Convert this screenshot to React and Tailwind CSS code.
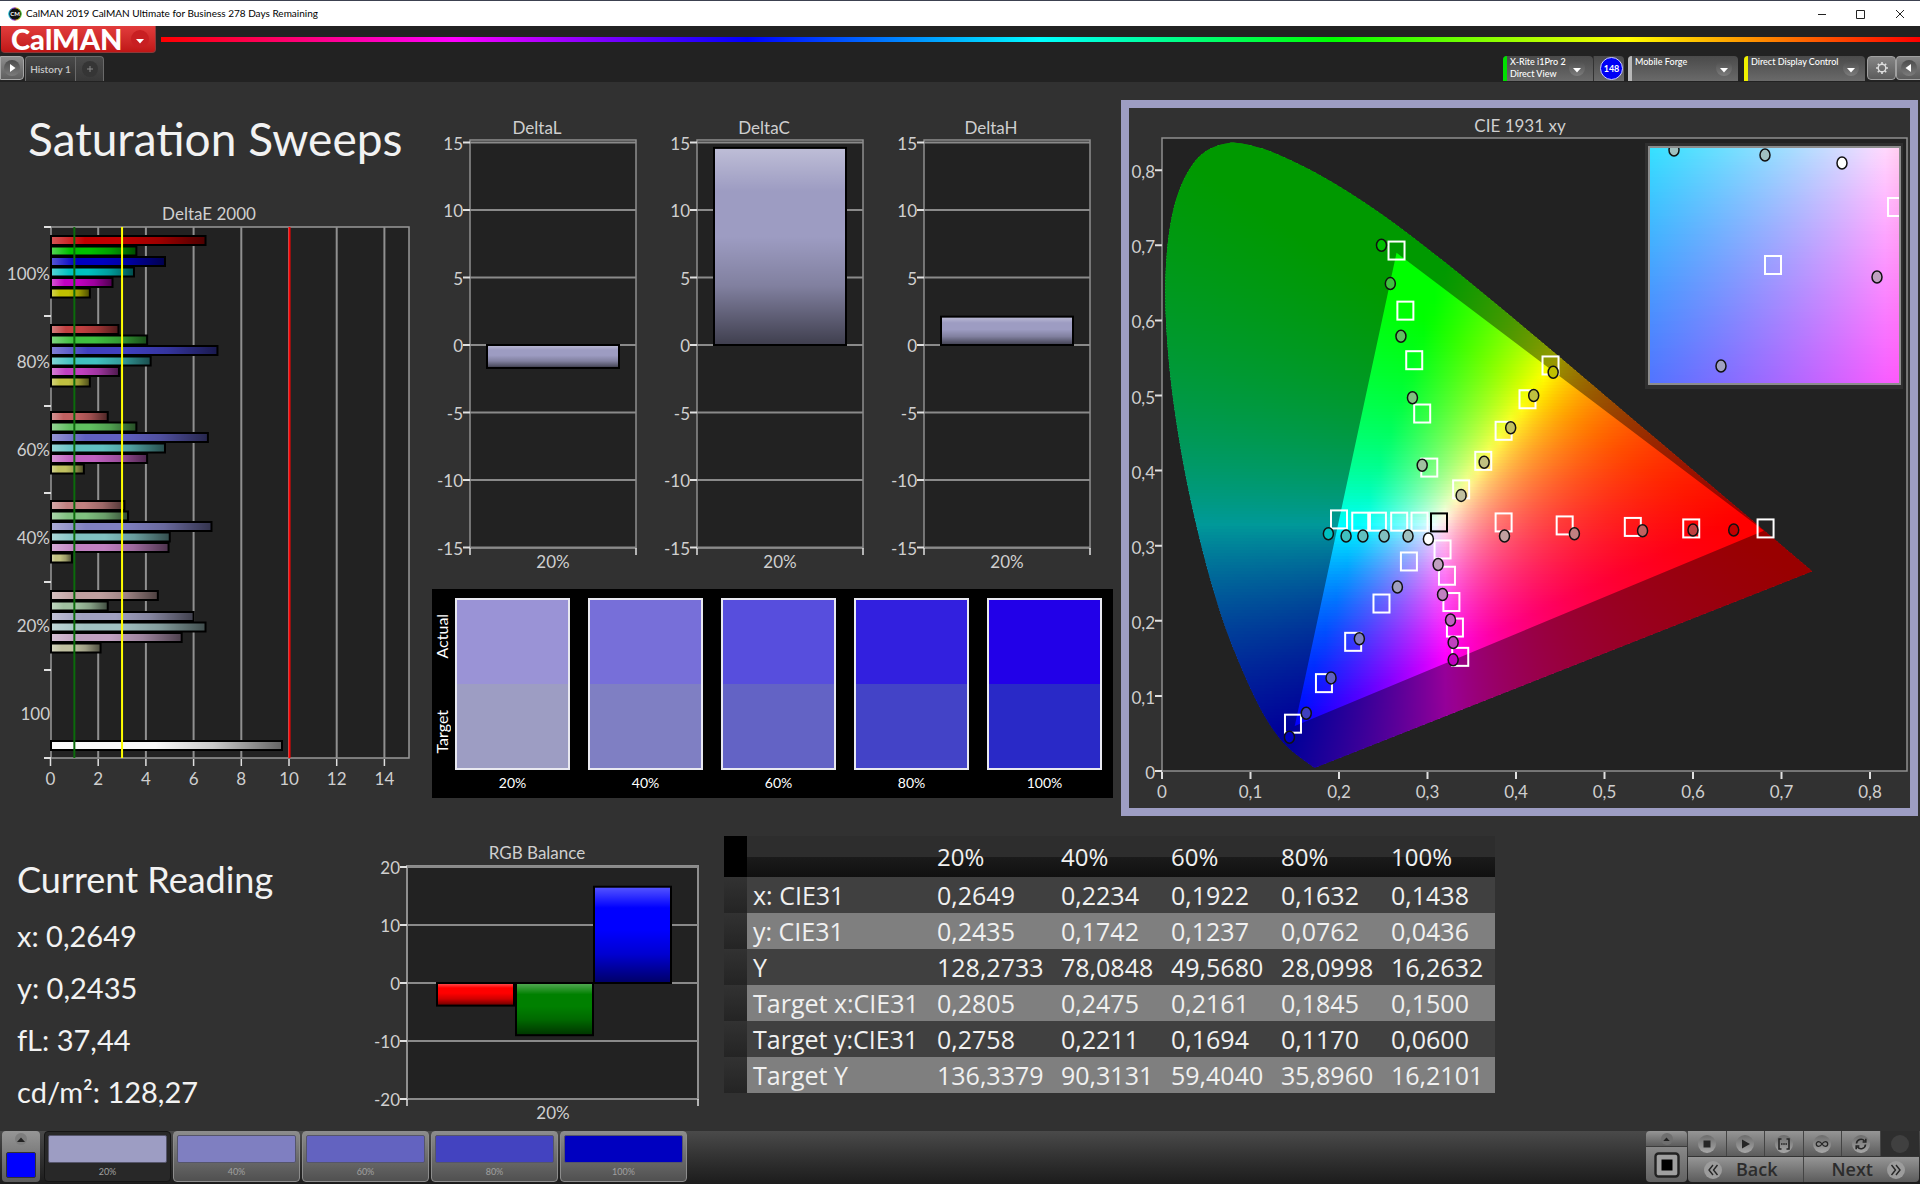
import React from "react";

const LEVELS = ["20%", "40%", "60%", "80%", "100%"];

// ---------- data ----------

const deltaE = [
  { label: "100%", low: 0, values: [6.5, 3.6, 4.8, 3.5, 2.6, 1.65] },
  { label: "80%", low: 64, values: [2.85, 4.05, 7, 4.2, 2.87, 1.65] },
  { label: "60%", low: 96, values: [2.4, 3.6, 6.6, 4.8, 4.05, 1.4] },
  { label: "40%", low: 128, values: [3.1, 3.25, 6.75, 5, 4.95, 0.9] },
  { label: "20%", low: 160, values: [4.5, 2.4, 6, 6.5, 5.5, 2.1] },
];

// which of r, g, b are on: red, green, blue, cyan, magenta, yellow
const HUES = [
  [1, 0, 0],
  [0, 1, 0],
  [0, 0, 1],
  [0, 1, 1],
  [1, 0, 1],
  [1, 1, 0],
];

function hueColor(hue, low) {
  return `rgb(${HUES[hue].map((on) => (on ? 192 : low)).join(",")})`;
}

const swatches = [
  { label: "20%", actual: "#9a93d6", target: "#9d9dc3", chip: "bg-[#9d9dc3]" },
  { label: "40%", actual: "#776fd9", target: "#7f7fc3", chip: "bg-[#7f7fc1]" },
  { label: "60%", actual: "#574edd", target: "#6363c5", chip: "bg-[#6363c0]" },
  { label: "80%", actual: "#3220df", target: "#4343c7", chip: "bg-[#4343c0]" },
  { label: "100%", actual: "#2200e8", target: "#2929c7", chip: "bg-[#0000c0]" },
];

const tableRows = [
  ["x: CIE31", "0,2649", "0,2234", "0,1922", "0,1632", "0,1438"],
  ["y: CIE31", "0,2435", "0,1742", "0,1237", "0,0762", "0,0436"],
  ["Y", "128,2733", "78,0848", "49,5680", "28,0998", "16,2632"],
  ["Target x:CIE31", "0,2805", "0,2475", "0,2161", "0,1845", "0,1500"],
  ["Target y:CIE31", "0,2758", "0,2211", "0,1694", "0,1170", "0,0600"],
  ["Target Y", "136,3379", "90,3131", "59,4040", "35,8960", "16,2101"],
];

const locus = [
  [0.1741, 0.005], [0.1714, 0.0051], [0.1644, 0.0109], [0.1566, 0.0177],
  [0.144, 0.0297], [0.1355, 0.0399], [0.1241, 0.0578], [0.1096, 0.0868],
  [0.0913, 0.1327], [0.0687, 0.2007], [0.0454, 0.295], [0.0235, 0.4127],
  [0.0082, 0.5384], [0.0039, 0.6548], [0.0139, 0.7502], [0.0389, 0.812],
  [0.0743, 0.8338], [0.1142, 0.8262], [0.1547, 0.8059], [0.1929, 0.7816],
  [0.2296, 0.7543], [0.2658, 0.7243], [0.3016, 0.6923], [0.3373, 0.6589],
  [0.3731, 0.6245], [0.4087, 0.5896], [0.4441, 0.5547], [0.4788, 0.5202],
  [0.5125, 0.4866], [0.5752, 0.4242], [0.627, 0.3725], [0.6658, 0.334],
  [0.6915, 0.3083], [0.719, 0.2809], [0.7347, 0.2653],
];

const gamut = [[0.68, 0.32], [0.265, 0.69], [0.15, 0.06]];

const targets = [
  [0.265, 0.693], [0.275, 0.613], [0.285, 0.547], [0.294, 0.476], [0.302, 0.404],
  [0.439, 0.54], [0.413, 0.495], [0.386, 0.453], [0.363, 0.413], [0.338, 0.375],
  [0.2, 0.335], [0.224, 0.332], [0.244, 0.332], [0.268, 0.332], [0.291, 0.332],
  [0.386, 0.331], [0.455, 0.327], [0.532, 0.325], [0.598, 0.323], [0.682, 0.323],
  [0.279, 0.279], [0.248, 0.223], [0.216, 0.172], [0.183, 0.117], [0.148, 0.063],
  [0.317, 0.295], [0.322, 0.26], [0.327, 0.225], [0.331, 0.191], [0.337, 0.152],
];

// per hue, from 100% down to 20%
const readings = [
  [[0.646, 0.321], [0.6, 0.321], [0.543, 0.32], [0.466, 0.316], [0.387, 0.313]],
  [[0.248, 0.7], [0.258, 0.649], [0.27, 0.579], [0.283, 0.497], [0.294, 0.407]],
  [[0.144, 0.045], [0.163, 0.077], [0.191, 0.124], [0.223, 0.176], [0.266, 0.245]],
  [[0.188, 0.316], [0.208, 0.313], [0.227, 0.313], [0.251, 0.313], [0.278, 0.313]],
  [[0.329, 0.148], [0.329, 0.171], [0.326, 0.201], [0.317, 0.235], [0.312, 0.275]],
  [[0.442, 0.531], [0.42, 0.5], [0.394, 0.457], [0.364, 0.411], [0.338, 0.367]],
];

// ---------- chromaticity helpers ----------

function xyToColor(x, y) {
  const z = 1 - x - y;
  const rgb = [
    3.2406 * x - 1.5372 * y - 0.4986 * z,
    -0.9689 * x + 1.8758 * y + 0.0415 * z,
    0.0557 * x - 0.204 * y + 1.057 * z,
  ].map((v) => Math.max(0, v));
  const max = Math.max(...rgb);
  return `rgb(${rgb.map((v) => Math.round((v / max) * 255)).join(",")})`;
}

function smoothPath(pts) {
  let d = `M${pts[0][0]} ${pts[0][1]}`;
  for (let i = 0; i < pts.length - 1; i++) {
    const p0 = pts[i - 1] || pts[i];
    const p1 = pts[i];
    const p2 = pts[i + 1];
    const p3 = pts[i + 2] || p2;
    d += `C${p1[0] + (p2[0] - p0[0]) / 6} ${p1[1] + (p2[1] - p0[1]) / 6} ${p2[0] - (p3[0] - p1[0]) / 6} ${p2[1] - (p3[1] - p1[1]) / 6} ${p2[0]} ${p2[1]}`;
  }
  return d + "Z";
}

// Fills a box with the colours of the xy plane, one gradient strip per few pixels
function ColorField({ id, left, top, width, height, strip, stops, toXY }) {
  const rows = Math.ceil(height / strip);
  const at = Array.from({ length: stops + 1 }, (_, i) => i / stops);
  return (
    <g>
      {Array.from({ length: rows }, (_, r) => {
        const cy = top + (r + 0.5) * strip;
        return (
          <g key={r}>
            <linearGradient id={`${id}-${r}`}>
              {at.map((t) => {
                const [x, y] = toXY(left + t * width, cy);
                return <stop key={t} offset={t} stopColor={xyToColor(x, y)} />;
              })}
            </linearGradient>
            <rect
              x={left}
              y={top + r * strip}
              width={width}
              height={strip + 1}
              fill={`url(#${id}-${r})`}
            />
          </g>
        );
      })}
    </g>
  );
}

// ---------- charts ----------

const AXIS = "fill-[#cfcfcf] text-[17px]";
const CHART = "block w-full h-auto font-[Lato,sans-serif]";

function Shading({ id, vertical }) {
  return (
    <linearGradient id={id} x1="0" y1="0" x2={vertical ? 0 : 1} y2={vertical ? 1 : 0}>
      <stop offset="0" stopColor="#fff" stopOpacity="0.34" />
      <stop offset="0.22" stopColor="#fff" stopOpacity="0" />
      <stop offset="0.45" stopColor="#000" stopOpacity="0" />
      <stop offset="0.7" stopColor="#000" stopOpacity="0.18" />
      <stop offset="1" stopColor="#000" stopOpacity="0.6" />
    </linearGradient>
  );
}

function Bar({ x, y, width, height, color, shade }) {
  return (
    <g>
      <rect x={x} y={y} width={width} height={height} fill={color} />
      <rect x={x} y={y} width={width} height={height} fill={`url(#${shade})`} stroke="#000" strokeWidth="2" />
    </g>
  );
}

function DeltaEChart() {
  const x = (v) => 50.5 + v * 23.85;
  const groupTop = [14, 103, 190, 279, 369];
  return (
    <svg viewBox="0 0 432 600" className={CHART}>
      <defs>
        <Shading id="shade-h" />
      </defs>
      <text x="209" y="24" textAnchor="middle" className={AXIS}>DeltaE 2000</text>
      <g transform="translate(0 31)">
        <rect x="51" y="0" width="358" height="531" fill="#222" stroke="#999" strokeWidth="1.5" />
        {[2, 4, 6, 8, 10, 12, 14].map((v) => (
          <path key={v} d={`M${x(v)} 0V531`} stroke="#909090" strokeWidth="2" />
        ))}
        {[0, 89, 179, 266, 355, 443, 531].map((y) => (
          <path key={y} d={`M44 ${y}H51`} stroke="#e0e0e0" strokeWidth="2" />
        ))}
        {deltaE.map((group, g) =>
          group.values.map((v, i) => (
            <Bar
              key={`${g}-${i}`}
              x={51}
              y={groupTop[g] + i * 10.5 - 5}
              width={x(v) - 51}
              height={9}
              color={hueColor(i, group.low)}
              shade="shade-h"
            />
          ))
        )}
        <Bar x={51} y={514} width={231} height={9} color="#f8f8f8" shade="shade-h" />
        <path d={`M${x(1)} 0V531`} stroke="#0b6b0b" strokeWidth="2" />
        <path d={`M${x(3)} 0V531`} stroke="#ffff00" strokeWidth="2" />
        <path d="M289.5 0V531" stroke="#ff0000" strokeWidth="2" />
        {["100%", "80%", "60%", "40%", "20%", "100"].map((label, i) => (
          <text key={i} x="50" y={53 + i * 88} textAnchor="end" className={AXIS}>{label}</text>
        ))}
        {[0, 2, 4, 6, 8, 10, 12, 14].map((v) => (
          <g key={v}>
            <path d={`M${x(v)} 532V539`} stroke="#e0e0e0" strokeWidth="1.5" />
            <text x={x(v)} y="558" textAnchor="middle" className={AXIS}>{v}</text>
          </g>
        ))}
      </g>
    </svg>
  );
}

function DeltaChart({ title, value }) {
  const y = (v) => 229 - v * 13.5;
  return (
    <svg viewBox="0 0 227 460" className={CHART}>
      <defs>
        <Shading id={`shade-${title}`} vertical />
      </defs>
      <text x="105" y="18" textAnchor="middle" className={AXIS}>{title}</text>
      <rect x="38" y="24" width="166" height="408" fill="#222" stroke="#8f8f8f" strokeWidth="1.5" />
      {[15, 10, 5, 0, -5, -10, -15].map((v) => (
        <g key={v}>
          <path d={`M38 ${y(v)}H204`} stroke="#8a8a8a" strokeWidth="2" />
          <path d={`M31 ${y(v)}H38`} stroke="#e0e0e0" strokeWidth="2" />
          <text x="31" y={y(v) + 7} textAnchor="end" className={AXIS}>{v}</text>
        </g>
      ))}
      <path d="M38 432V439M204 432V439" stroke="#e0e0e0" strokeWidth="1.5" />
      <Bar
        x={55}
        y={Math.min(y(0), y(value))}
        width={132}
        height={Math.abs(value) * 13.5}
        color="#9d9cc2"
        shade={`shade-${title}`}
      />
      <text x="121" y="452" textAnchor="middle" className={AXIS}>20%</text>
    </svg>
  );
}

function RgbBalance() {
  const y = (v) => 147 - v * 5.8;
  const bars = [
    { color: "#ff0000", value: -3.9, x: 67 },
    { color: "#008000", value: -9, x: 146 },
    { color: "#0000ff", value: 16.6, x: 224 },
  ];
  return (
    <svg viewBox="0 0 346 290" className={CHART}>
      <defs>
        <Shading id="shade-rgb" vertical />
      </defs>
      <text x="167" y="23" textAnchor="middle" className={AXIS}>RGB Balance</text>
      <rect x="37" y="30" width="291" height="233" fill="#222" stroke="#8f8f8f" strokeWidth="2" />
      {[20, 10, 0, -10, -20].map((v) => (
        <g key={v}>
          <path d={`M37 ${y(v)}H328`} stroke="#8a8a8a" strokeWidth="2" />
          <path d={`M30 ${y(v)}H37`} stroke="#e0e0e0" strokeWidth="2" />
          <text x="30" y={y(v) + 7} textAnchor="end" className={AXIS}>{v}</text>
        </g>
      ))}
      <path d="M37 263V270M328 263V270" stroke="#e0e0e0" strokeWidth="1.5" />
      {bars.map((b) => (
        <Bar
          key={b.color}
          x={b.x}
          y={Math.min(y(0), y(b.value))}
          width={77}
          height={Math.abs(b.value) * 5.8}
          color={b.color}
          shade="shade-rgb"
        />
      ))}
      <text x="183" y="283" textAnchor="middle" className={AXIS}>20%</text>
    </svg>
  );
}

function TargetBox({ x, y, color = "#fff" }) {
  return <rect x={x - 8} y={y - 9} width="16" height="18" fill="none" stroke={color} strokeWidth="2" />;
}

function ReadingDot({ x, y, fill }) {
  return <ellipse cx={x} cy={y} rx="5" ry="6" fill={fill} stroke="#111" strokeWidth="1.5" />;
}

function CieChart() {
  const px = (x) => 33 + x * 885;
  const py = (y) => 663 - y * 751;
  const toXY = (x, y) => [(x - 33) / 885, (663 - y) / 751];
  const locusPath = smoothPath(locus.map(([x, y]) => [px(x), 663 - y * 753]));
  const gamutPath = `M${gamut.map(([x, y]) => `${px(x)} ${py(y)}`).join("L")}Z`;
  const lows = [0, 64, 96, 128, 160];
  return (
    <svg viewBox="0 0 781 700" className={CHART}>
      <defs>
        <clipPath id="locus-clip"><path d={locusPath} /></clipPath>
        <clipPath id="inset-clip"><rect x="520" y="39" width="250" height="237" /></clipPath>
      </defs>
      <text x="391" y="24" textAnchor="middle" className={AXIS}>CIE 1931 xy</text>
      <rect x="33" y="30" width="745" height="633" fill="#222" stroke="#8f8f8f" strokeWidth="1.5" />
      <g clipPath="url(#locus-clip)">
        <ColorField id="cie" left={33} top={31} width={654} height={632} strip={3} stops={60} toXY={toXY} />
        <path d={`M0 0H782V700H0Z${gamutPath}`} fillRule="evenodd" fill="#000" fillOpacity="0.4" />
      </g>
      {[0, 1, 2, 3, 4, 5, 6, 7, 8].map((v) => (
        <g key={v}>
          <path d={`M${px(v / 10)} 664V671M26 ${py(v / 10)}H33`} stroke="#e0e0e0" strokeWidth="2" />
          <text x={px(v / 10)} y="690" textAnchor="middle" className={AXIS}>{v ? `0,${v}` : "0"}</text>
          <text x="26" y={py(v / 10) + 8} textAnchor="end" className={AXIS}>{v ? `0,${v}` : "0"}</text>
        </g>
      ))}
      {targets.map(([x, y]) => (
        <TargetBox key={`${x}-${y}`} x={px(x)} y={py(y)} />
      ))}
      <TargetBox x={px(0.313)} y={py(0.331)} color="#000" />
      {readings.map((points, hue) =>
        points.map(([x, y], i) => (
          <ReadingDot key={`${hue}-${i}`} x={px(x)} y={py(y)} fill={hueColor(hue, lows[i])} />
        ))
      )}
      <ReadingDot x={px(0.301)} y={py(0.309)} fill="#fff" />

      {/* magnified view around the current reading */}
      <rect x="516" y="35" width="258" height="246" fill="#2f2f2f" />
      <g clipPath="url(#inset-clip)">
        <ColorField
          id="inset"
          left={520}
          top={39}
          width={252}
          height={238}
          strip={3}
          stops={16}
          toXY={(x, y) => [0.2649 + (x - 592) * 0.0003, 0.2435 + (258 - y) * 0.000318]}
        />
        <TargetBox x={644} y={157} />
        <TargetBox x={767} y={99} />
        <ReadingDot x={545} y={42} fill="#a0c0c0" />
        <ReadingDot x={636} y={47} fill="#a0c0c0" />
        <ReadingDot x={713} y={55} fill="#fff" />
        <ReadingDot x={748} y={169} fill="#c0a0c0" />
        <ReadingDot x={592} y={258} fill="#a0a0c0" />
      </g>
      <rect x="520" y="39" width="251" height="237" fill="none" stroke="#8c8c8c" strokeWidth="2" />
    </svg>
  );
}

// ---------- header ----------

function Knob({ children, className = "" }) {
  return (
    <span className={`flex size-4 shrink-0 items-center justify-center rounded-full bg-linear-to-b from-[#4c4c4c] to-[#7c7c7c] ${className}`}>
      {children}
    </span>
  );
}

function DownArrow() {
  return (
    <svg viewBox="0 0 8 5" className="mt-1 h-[5px] w-2" fill="#fff">
      <path d="M0 0H8L4 4.6Z" />
    </svg>
  );
}

function TitleBar() {
  return (
    <div className="flex h-[26px] items-center border-t border-[#3c4150] bg-white pl-2 text-[10px] text-black">
      <svg viewBox="0 0 14 14" className="mr-1 size-3.5">
        <defs>
          <linearGradient id="ring">
            <stop offset="0" stopColor="#00c8d8" />
            <stop offset="0.4" stopColor="#a020f0" />
            <stop offset="0.7" stopColor="#f0d000" />
            <stop offset="1" stopColor="#20c020" />
          </linearGradient>
        </defs>
        <circle cx="7" cy="7" r="6.2" fill="#111" stroke="url(#ring)" />
        <text x="7" y="9.2" textAnchor="middle" className="fill-white text-[6px] font-bold">CM</text>
      </svg>
      <span className="grow">CalMAN 2019 CalMAN Ultimate for Business 278 Days Remaining</span>
      <div className="flex">
        <button aria-label="Minimize" className="flex w-[38px] justify-center">
          <svg viewBox="0 0 10 10" className="size-[10px]" stroke="#222" fill="none"><path d="M1 5.5H9" /></svg>
        </button>
        <button aria-label="Maximize" className="flex w-[38px] justify-center">
          <svg viewBox="0 0 10 10" className="size-[10px]" stroke="#222" fill="none"><path d="M1.5 1.5H9.5V9.5H1.5Z" /></svg>
        </button>
        <button aria-label="Close" className="flex w-[41px] justify-center">
          <svg viewBox="0 0 10 10" className="size-[10px]" stroke="#222" fill="none"><path d="M1 1L9 9M9 1L1 9" /></svg>
        </button>
      </div>
    </div>
  );
}

function DeviceMenu({ lines, stripe, className }) {
  return (
    <button className={`flex h-[25px] items-start rounded-t-sm bg-linear-to-b from-[#4a4a4a] to-[#6a6a6a] text-left text-[9px] leading-[12px] font-medium text-white ${className}`}>
      <span className={`h-full w-1 shrink-0 rounded-tl-sm ${stripe}`} />
      <span className="grow whitespace-nowrap pl-[3px]">
        {lines.map((line) => (
          <span key={line} className="block">{line}</span>
        ))}
      </span>
      <Knob className="mt-1 mr-1.5"><DownArrow /></Knob>
    </button>
  );
}

function Header() {
  return (
    <header className="bg-[#222] pb-px">
      <div className="flex h-[27px] items-center pl-px">
        <button className="flex h-full w-[155px] items-center justify-between rounded-b-sm border-r border-b border-[#8a3a3a] bg-linear-to-b from-[#e23c3c] to-[#c01616] pl-2.5 pr-1.5">
          <span className="text-[29px] leading-6 font-black text-white">CalMAN</span>
          <span className="flex size-[18px] items-center justify-center rounded-full bg-[#c81f22]"><DownArrow /></span>
        </button>
        <div className="ml-[5px] h-[5px] grow bg-[linear-gradient(90deg,#f00,#f0f,#00f,#0ff,#0f0,#ff0,#f00)]" />
      </div>
      <div className="flex h-7 items-end justify-between pt-[3px]">
        <div className="flex items-start">
          <button aria-label="Show workflow" className="flex h-6 w-6 items-center justify-center rounded-r-sm border border-[#a8a8a8] bg-linear-to-b from-[#8d8d8d] to-[#5f5f5f]">
            <Knob>
              <svg viewBox="0 0 6 8" className="ml-0.5 h-2 w-1.5" fill="#fff"><path d="M0 0L5.5 4L0 8Z" /></svg>
            </Knob>
          </button>
          <button className="ml-px h-[25px] w-[50px] rounded-tl-sm border-t border-l border-[#6a6a6a] bg-linear-to-b from-[#4a4a4a] to-[#303030] text-[10px] font-semibold whitespace-nowrap text-[#c8c8c8]">
            History 1
          </button>
          <button aria-label="Add history" className="flex h-[25px] w-[29px] items-center justify-center rounded-tr-sm border-x border-t border-[#6a6a6a] bg-linear-to-b from-[#4a4a4a] to-[#383838]">
            <span className="flex size-4 items-center justify-center rounded-full bg-[#353535]">
              <svg viewBox="0 0 6 6" className="size-1.5" stroke="#8a8a8a"><path d="M3 0V6M0 3H6" /></svg>
            </span>
          </button>
        </div>
        <div className="flex items-start">
          <DeviceMenu lines={["X-Rite i1Pro 2", "Direct View"]} stripe="bg-[#00e000]" className="w-[90px] pr-0.5" />
          <span className="mr-1 flex h-[25px] w-[31px] items-center justify-end rounded-tr-sm border-l border-[#333] bg-linear-to-b from-[#4a4a4a] to-[#6a6a6a] pr-px">
            <span className="flex size-[23px] items-center justify-center rounded-full border border-[#d0d0ff] bg-[#0000f5] text-[9px] font-bold text-white">148</span>
          </span>
          <DeviceMenu lines={["Mobile Forge"]} stripe="bg-[#b8b8b8]" className="mr-1.5 w-[110px]" />
          <DeviceMenu lines={["Direct Display Control"]} stripe="bg-[#f0f000]" className="mr-0.5 w-[121px]" />
          <button aria-label="Settings" className="flex h-6 w-[29px] items-center justify-center rounded-sm border border-[#a0a0a0] bg-linear-to-b from-[#858585] to-[#5c5c5c]">
            <svg viewBox="0 0 14 14" className="size-3.5" fill="none" stroke="#ddd">
              <circle cx="7" cy="7" r="3.8" strokeWidth="1.4" />
              <path d="M7 1V3M7 11V13M1 7H3M11 7H13M2.8 2.8L4.2 4.2M9.8 9.8L11.2 11.2M11.2 2.8L9.8 4.2M4.2 9.8L2.8 11.2" strokeWidth="1.6" />
            </svg>
          </button>
          <button aria-label="Hide panel" className="flex h-6 w-6 items-center justify-center rounded-l-sm border border-r-0 border-[#a0a0a0] bg-linear-to-b from-[#858585] to-[#5c5c5c]">
            <Knob>
              <svg viewBox="0 0 6 8" className="mr-0.5 h-2 w-1.5" fill="#fff"><path d="M6 0L0.5 4L6 8Z" /></svg>
            </Knob>
          </button>
        </div>
      </div>
    </header>
  );
}

// ---------- body ----------

function SwatchPanel() {
  return (
    <div className="flex bg-black">
      <div className="flex w-5 shrink-0 flex-col pb-5 text-base leading-5 text-white">
        <span className="flex flex-1 rotate-180 items-center justify-center [writing-mode:vertical-rl]">Actual</span>
        <span className="flex flex-1 rotate-180 items-center justify-center [writing-mode:vertical-rl]">Target</span>
      </div>
      <div className="grid grow grid-cols-5 gap-[18px] pt-[9px] pr-[11px] pb-0.5 pl-[3px]">
        {swatches.map((s) => (
          <div key={s.label} className="text-center text-sm leading-[26px] text-white">
            <div className="border-2 border-[#e8e8f0]">
              <div className="h-[84px]" style={{ backgroundColor: s.actual }} />
              <div className="h-[84px]" style={{ backgroundColor: s.target }} />
            </div>
            {s.label}
          </div>
        ))}
      </div>
    </div>
  );
}

function CurrentReading() {
  return (
    <section className="pt-[17px] pl-[17px] text-[29px] leading-[52px] text-[#f2f2f2]">
      <h2 className="mb-[5px] text-[36px]">Current Reading</h2>
      <p>x: 0,2649</p>
      <p>y: 0,2435</p>
      <p>fL: 37,44</p>
      <p>cd/m²: 128,27</p>
    </section>
  );
}

function ReadingTable() {
  return (
    <table className="border-collapse text-left font-['Open_Sans',sans-serif] text-[25px] leading-9 text-[#f0f0f0]">
      <thead>
        <tr className="h-[41px] bg-[linear-gradient(#2d2d2d_50%,#1b1b1b_50%,#101010)] text-[24px]">
          <th aria-label="Row" className="w-[23px] bg-black" />
          <th aria-label="Quantity" className="w-[184px]" />
          {LEVELS.map((level, i) => (
            <th key={level} scope="col" className={i === 0 ? "w-[124px] pl-1.5 font-normal" : "w-[110px] pl-1.5 font-normal"}>
              {level}
            </th>
          ))}
        </tr>
      </thead>
      <tbody>
        {tableRows.map(([label, ...cells], i) => (
          <tr key={label} className={i % 2 ? "bg-[#7f7f7f]" : "bg-[#404040]"}>
            <td className="bg-linear-to-b from-[#323232] to-[#242424]" />
            <th scope="row" className="pl-1.5 font-normal whitespace-nowrap">{label}</th>
            {cells.map((cell, c) => (
              <td key={c} className="pl-1.5">{cell}</td>
            ))}
          </tr>
        ))}
      </tbody>
    </table>
  );
}

// ---------- footer ----------

const GREY = "bg-linear-to-b from-[#969696] to-[#5c5c5c]";

function TransportButton({ label, children }) {
  return (
    <button aria-label={label} className={`flex h-[25px] items-center justify-center border-r border-[#444] ${GREY}`}>
      <span className="flex size-[18px] items-center justify-center rounded-full bg-linear-to-b from-[#6c6c6c] to-[#a8a8a8]">
        <svg viewBox="0 0 14 14" className="size-3.5" fill="none" stroke="#262626" strokeWidth="1.6">
          {children}
        </svg>
      </span>
    </button>
  );
}

function Footer() {
  return (
    <footer className="flex h-[53px] items-stretch justify-between bg-linear-to-b from-[#4a4a4a] to-[#1c1c1c] pb-0.5">
      <div className="flex">
        <button aria-label="Pattern color" className={`ml-0.5 mr-1 flex w-[38px] flex-col items-center justify-between rounded-sm pb-1 pt-0.5 ${GREY}`}>
          <span className="flex size-3 items-center justify-center rounded-full bg-[#7d7d7d]">
            <svg viewBox="0 0 8 5" className="h-[5px] w-2" fill="#222"><path d="M0 5H8L4 0.5Z" /></svg>
          </span>
          <span className="h-[26px] w-[30px] rounded-xs border border-[#333] bg-[#0000ff]" />
        </button>
        {swatches.map((s, i) => (
          <button
            key={s.label}
            className={`mr-0.5 flex w-[127px] flex-col rounded-sm border px-[3px] pt-[3px] text-[9px] leading-[18px] text-[#a0a0a0] ${
              i === 0 ? "border-[#151515] bg-[#282828]" : "border-[#8c8c8c] bg-linear-to-b from-[#8c8c8c] to-[#505050]"
            }`}
          >
            <span className={`h-[31px] w-full rounded-xs border border-[#55556a] ${s.chip}`} />
            <span className="w-full text-center">{s.label}</span>
          </button>
        ))}
      </div>
      <div className="mr-px flex">
        <div className="flex w-[41px] flex-col gap-px">
          <button aria-label="Expand" className={`flex h-[15px] items-center justify-center rounded-t-sm ${GREY}`}>
            <span className="flex size-3 items-center justify-center rounded-full bg-[#6f6f6f]">
              <svg viewBox="0 0 8 5" className="h-1 w-[7px]" fill="#222"><path d="M0 5H8L4 0.5Z" /></svg>
            </span>
          </button>
          <button aria-label="Show pattern" className="flex grow items-center justify-center rounded-b-sm bg-linear-to-b from-[#888] to-[#636363]">
            <svg viewBox="0 0 26 26" className="size-[26px]">
              <rect x="1.5" y="1.5" width="23" height="23" rx="3" fill="#a0a0a0" stroke="#222" strokeWidth="2.4" />
              <rect x="7.5" y="7.5" width="11" height="11" fill="#000" />
            </svg>
          </button>
        </div>
        <div className="ml-px w-[231px]">
          <div className="grid grid-cols-6">
            <TransportButton label="Stop"><path d="M3.5 3.5H10.5V10.5H3.5Z" fill="#262626" stroke="none" /></TransportButton>
            <TransportButton label="Play"><path d="M4 2.5L12 7L4 11.5Z" fill="#262626" stroke="none" /></TransportButton>
            <TransportButton label="Read series">
              <path d="M4.500 2H2V12H4.500M9.500 2H12V12H9.500M4 7H5.600M6.200 7H7.800M8.400 7H10" />
            </TransportButton>
            <TransportButton label="Read continuously">
              <path d="M7 7C5.8 5.2 4.8 4.7 3.6 4.7A2.3 2.3 0 0 0 3.6 9.3C4.8 9.3 5.8 8.8 7 7C8.2 5.2 9.2 4.7 10.4 4.7A2.3 2.3 0 0 1 10.4 9.3C9.2 9.3 8.2 8.8 7 7Z" strokeWidth="1.3" />
            </TransportButton>
            <TransportButton label="Repeat">
              <path d="M2.5 6.5A4.5 4.5 0 0 1 10.5 4M11.5 7.5A4.5 4.5 0 0 1 3.5 10M11.8 1.8V5H8.6M2.2 12.2V9H5.4" />
            </TransportButton>
            <span className="flex h-[25px] items-center justify-center bg-[#2e2e2e]">
              <span className="size-[18px] rounded-full bg-[#404040]" />
            </span>
          </div>
          <div className="mt-px grid grid-cols-2 font-['Open_Sans',sans-serif] text-lg leading-[25px] font-semibold text-[#2c2c2c]">
            <button className={`flex items-center gap-3.5 rounded-bl-sm border-r border-[#444] pl-4 ${GREY}`}>
              <span className="flex size-[18px] items-center justify-center rounded-full bg-[#9c9c9c]">
                <svg viewBox="0 0 12 12" className="size-3" fill="none" stroke="#262626" strokeWidth="1.4"><path d="M6 1L2 6L6 11M10.500 1L6.500 6L10.500 11" /></svg>
              </span>
              Back
            </button>
            <button className={`flex items-center justify-end gap-3.5 rounded-br-sm pr-3.5 ${GREY}`}>
              Next
              <span className="flex size-[18px] items-center justify-center rounded-full bg-[#9c9c9c]">
                <svg viewBox="0 0 12 12" className="size-3" fill="none" stroke="#262626" strokeWidth="1.4"><path d="M1.500 1L5.500 6L1.500 11M6 1L10 6L6 11" /></svg>
              </span>
            </button>
          </div>
        </div>
      </div>
    </footer>
  );
}

export default function App() {
  return (
    <div className="flex min-h-screen flex-col bg-[#313131] font-[Lato,sans-serif]">
      <TitleBar />
      <Header />
      <main className="grow">
        <div className="grid grid-cols-[432fr_681fr_807fr] items-start">
          <section className="pt-[22px]">
            <h1 className="pl-7 text-[46px] leading-[70px] text-[#f2f2f2]">Saturation Sweeps</h1>
            <div className="pt-[22px]">
              <DeltaEChart />
            </div>
          </section>
          <section className="pt-[34px]">
            <div className="mb-[13px] grid grid-cols-3">
              <DeltaChart title="DeltaL" value={-1.7} />
              <DeltaChart title="DeltaC" value={14.6} />
              <DeltaChart title="DeltaH" value={2.1} />
            </div>
            <SwatchPanel />
          </section>
          <section className="mt-[18px] mr-0.5 ml-2 border-8 border-[#9d9dc3]">
            <CieChart />
          </section>
        </div>
        <div className="grid grid-cols-[370fr_346fr_1204fr] items-start pt-5">
          <CurrentReading />
          <RgbBalance />
          <div className="pl-2">
            <ReadingTable />
          </div>
        </div>
      </main>
      <Footer />
    </div>
  );
}
